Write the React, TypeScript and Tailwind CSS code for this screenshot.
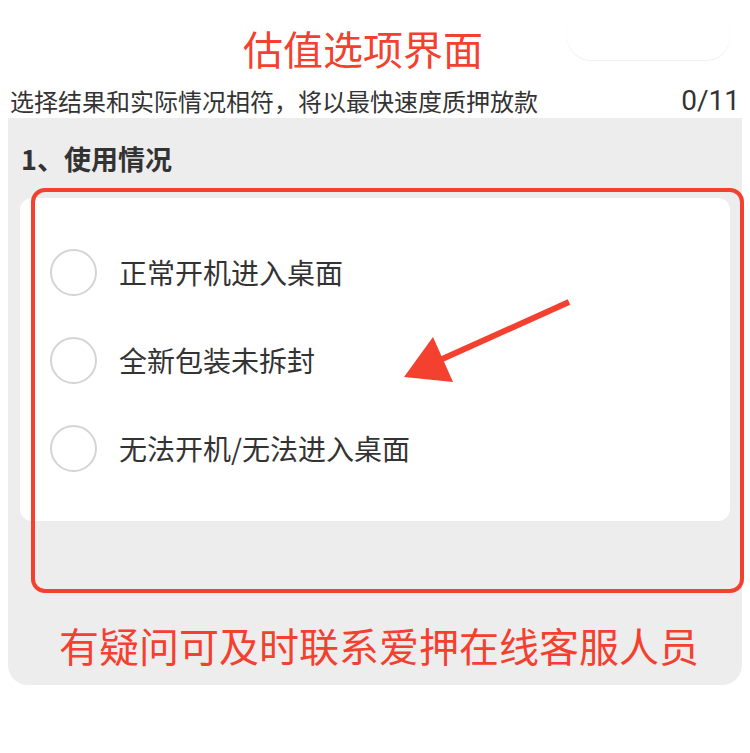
const font = "font-['Noto_Sans_CJK_SC','Noto_Sans',sans-serif]";

const options = ['正常开机进入桌面', '全新包装未拆封', '无法开机/无法进入桌面'];

function Option({ label }: { label: string }) {
  return (
    <div className="flex items-center h-[88px]">
      <div className="w-[47px] h-[47px] rounded-full border-2 border-[#d4d4d4] bg-white shrink-0" />
      <span className="ml-[22px] text-[28px] leading-none text-[#333]">{label}</span>
    </div>
  );
}

export default function App() {
  return (
    <div className={`relative w-[750px] h-[753px] bg-white overflow-hidden ${font}`}>
      {/* header */}
      <div className="relative h-[84px]">
        <div className="absolute left-[567px] top-[8px] w-[163px] h-[52px] rounded-[24px] bg-white shadow-[0_1px_1px_rgba(0,0,0,0.07)]" />
        <h1 className="relative pt-[28px] pr-[24px] text-center text-[40px] leading-[40px] font-normal text-[#f4402f]">
          估值选项界面
        </h1>
      </div>
      <div className="flex items-center justify-between h-[34px] pl-[10px] pr-[10px]">
        <span className="text-[24px] leading-none text-[#333]">选择结果和实际情况相符，将以最快速度质押放款</span>
        <span className="text-[28px] leading-none text-[#333] font-['Roboto',sans-serif]">0/11</span>
      </div>

      {/* panel */}
      <div className="ml-[8px] w-[734px] h-[567px] bg-[#ededed] rounded-b-[20px] flex flex-col">
        <div className="pl-[13px] pt-[27px] h-[80px] text-[27px] leading-none font-bold text-[#333]">1、使用情况</div>
        <div className="ml-[12px] w-[710px] h-[323px] bg-white rounded-[12px] pl-[30px] pt-[30px]">
          {options.map((o) => (
            <Option key={o} label={o} />
          ))}
        </div>
        <div className="mt-[104px] pl-[8px] text-center text-[40px] leading-none text-[#f4402f]">有疑问可及时联系爱押在线客服人员</div>
      </div>

      {/* annotation overlay */}
      <div className="absolute left-[31px] top-[188px] w-[713px] h-[405px] border-[4px] border-[#f4402f] rounded-[14px]" />
      <svg className="absolute left-0 top-0" width="750" height="753" viewBox="0 0 750 753">
        <line x1="569" y1="302" x2="440" y2="360" stroke="#f4402f" strokeWidth="6" />
        <polygon points="404,377 433,337 453,382" fill="#f4402f" />
      </svg>
    </div>
  );
}
